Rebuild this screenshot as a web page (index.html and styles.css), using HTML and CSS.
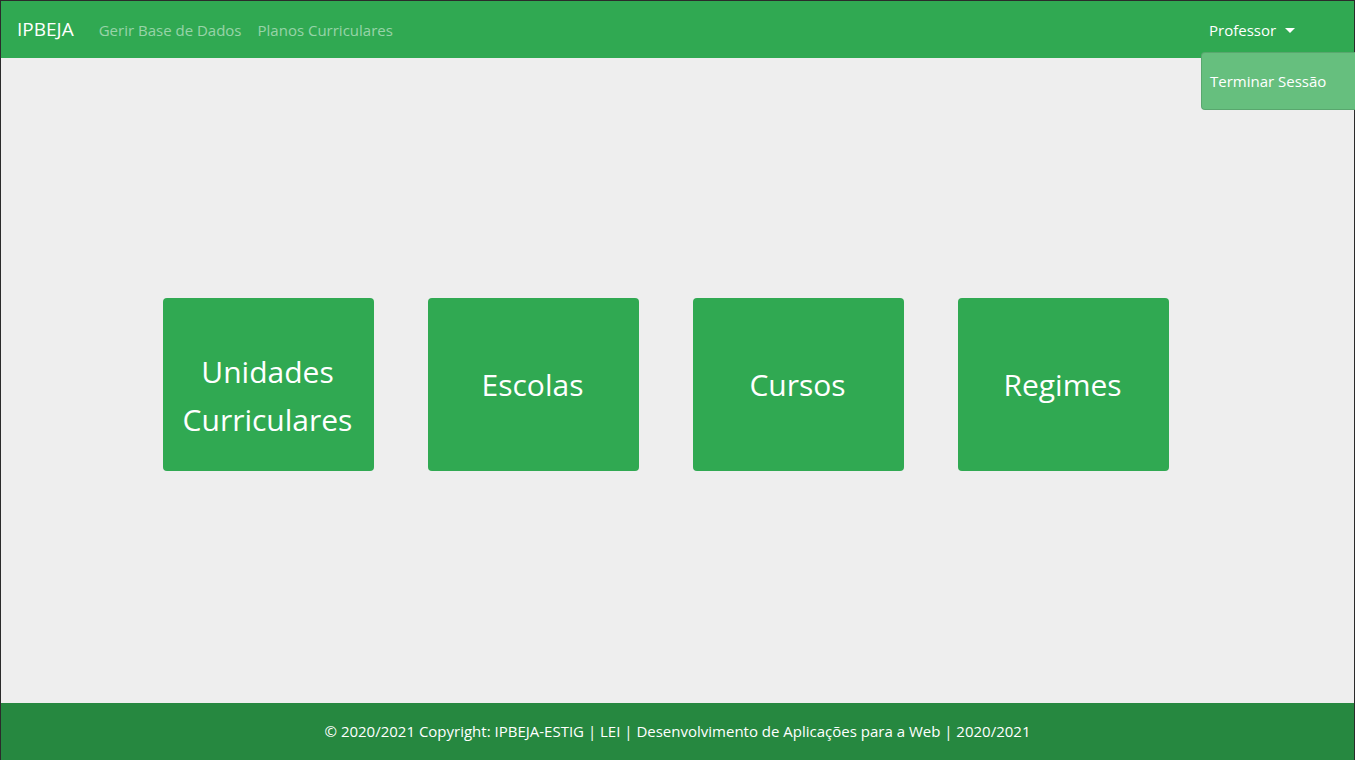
FILE: index.html
```html
<!DOCTYPE html>
<html lang="pt">
<head>
<meta charset="utf-8">
<title>IPBEJA</title>
<link rel="stylesheet" href="styles.css">
</head>
<body>
<div class="frame">
  <nav class="navbar">
    <a class="brand" href="#">IPBEJA</a>
    <ul class="nav-links">
      <li><a href="#">Gerir Base de Dados</a></li>
      <li><a href="#">Planos Curriculares</a></li>
    </ul>
    <div class="user">
      <a class="user-toggle" href="#">Professor <span class="caret"></span></a>
      <div class="dropdown">
        <a href="#">Terminar Sessão</a>
      </div>
    </div>
  </nav>
  <main class="main">
    <div class="tiles">
      <a class="tile tile-two" href="#">Unidades Curriculares</a>
      <a class="tile" href="#">Escolas</a>
      <a class="tile" href="#">Cursos</a>
      <a class="tile" href="#">Regimes</a>
    </div>
  </main>
  <footer class="footer">© 2020/2021 Copyright: IPBEJA-ESTIG | LEI | Desenvolvimento de Aplicações para a Web | 2020/2021</footer>
</div>
</body>
</html>
```
FILE: styles.css
```css
* { box-sizing: border-box; }
html, body { margin: 0; padding: 0; height: 100%; }
body {
  font-family: "Segoe UI", "Open Sans", "Noto Sans", Arial, sans-serif;
  font-size: 16px;
  line-height: 1.5;
  color: #212529;
  background: #2b2b2b;
}
a { text-decoration: none; }
.frame {
  height: 760px;
  border-top: 1px solid #2b2b2b;
  border-left: 1px solid #2b2b2b;
  border-right: 1px solid #2b2b2b;
  display: flex;
  flex-direction: column;
  background: #eeeeee;
}
.navbar {
  position: relative;
  height: 57px;
  flex: none;
  background: #30a952;
  display: flex;
  align-items: center;
  padding: 0 16px;
}
.brand {
  color: #fff;
  font-size: 19px;
  margin-right: 25px;
  padding-bottom: 1px;
}
.nav-links {
  list-style: none;
  margin: 0;
  padding: 0;
  display: flex;
  gap: 16px;
}
.nav-links a {
  color: rgba(255, 255, 255, 0.5);
  font-size: 15px;
}
.user { margin-left: auto; margin-right: 43px; }
.user-toggle { color: #fff; font-size: 15px; }
.caret {
  display: inline-block;
  margin-left: 5px;
  vertical-align: 3px;
  border-top: 5px solid #fff;
  border-left: 5px solid transparent;
  border-right: 5px solid transparent;
}
.dropdown {
  position: absolute;
  top: 51px;
  right: -4px;
  width: 157px;
  height: 58px;
  background: #66bf7e;
  border: 1px solid rgba(0, 0, 0, 0.12);
  border-radius: 4px;
  display: flex;
  align-items: center;
  padding: 0 8px 0 8px;
}
.dropdown a { color: #fff; font-size: 15px; padding-top: 1px; }
.main {
  flex: 1;
  padding: 240px 0 0 162px;
}
.tiles {
  display: flex;
  gap: 54px;
}
.tile {
  width: 211px;
  height: 173px;
  background: #30a952;
  border-radius: 4px;
  color: #fff;
  font-size: 30px;
  line-height: 48px;
  display: flex;
  align-items: center;
  justify-content: center;
  text-align: center;
  padding: 0 18px 0 16px;
}
.tile-two { padding-top: 23px; }
.footer {
  height: 57px;
  flex: none;
  background: #268840;
  color: #fff;
  font-size: 15px;
  display: flex;
  align-items: center;
  justify-content: center;
  padding-bottom: 1px;
}
```
